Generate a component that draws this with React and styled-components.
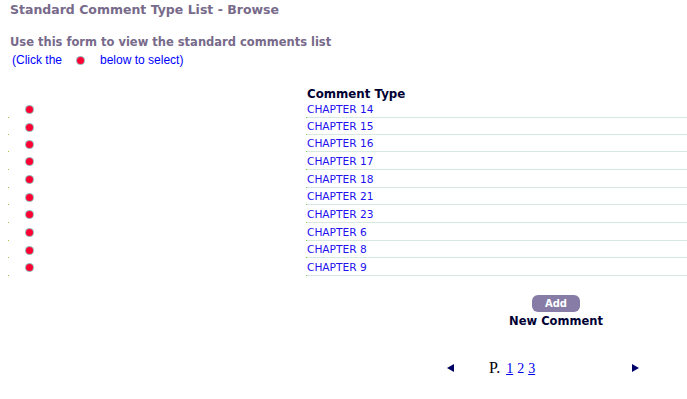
import React from "react";
import styled, { createGlobalStyle } from "styled-components";

const Global = createGlobalStyle`
  html, body { margin: 0; padding: 0; background: #ffffff; }
  body { font-family: "DejaVu Sans", Verdana, sans-serif; overflow: hidden; }
`;

const Page = styled.div`
  width: 687px;
  height: 399px;
  padding: 2px 0 0 10px;
  box-sizing: border-box;
`;

const Title = styled.h1`
  margin: 0;
  font-size: 12.5px;
  line-height: 16px;
  font-weight: bold;
  color: #776a8a;
`;

const Intro = styled.h2`
  margin: 17px 0 0;
  font-size: 11.5px;
  line-height: 15px;
  font-weight: bold;
  color: #776a8a;
`;

const Hint = styled.div`
  margin: 3px 0 0 2px;
  font-family: "Liberation Sans", Arial, sans-serif;
  font-size: 12px;
  line-height: 14px;
  color: #0000ff;
  display: flex;
  align-items: center;
`;

const Dot = styled.span`
  display: inline-block;
  width: 7px;
  height: 7px;
  border-radius: 50%;
  background: #ff0033;
  box-shadow: 0 0 0 1px rgba(70, 120, 130, 0.55);
  margin: ${(p) => p.$m || "0"};
  flex: none;
`;

const Table = styled.div`
  margin: 21px 0 0 -2px;
  display: grid;
  grid-template-columns: 298px 1fr;
`;

const HeaderCell = styled.div`
  font-size: 11.8px;
  line-height: 12px;
  font-weight: bold;
  color: #000033;
  padding-left: 1px;
`;

const BulletCell = styled.div`
  position: relative;
  height: ${(p) => p.$h}px;
  display: flex;
  align-items: center;
  padding-left: 18px;
  &::after {
    content: "";
    position: absolute;
    left: 0;
    bottom: 0;
    width: 1px;
    height: 1px;
    background: #99cc44;
  }
`;

const NameCell = styled.div`
  position: relative;
  height: ${(p) => p.$h}px;
  box-sizing: border-box;
  border-bottom: 1px solid #d6e8e2;
  display: flex;
  align-items: center;
  padding-left: 1px;
  font-size: 10.6px;
  color: #2211ee;
  &::after {
    content: "";
    position: absolute;
    left: 0;
    bottom: -1px;
    width: 1px;
    height: 1px;
    background: #88cc44;
  }
`;

const Actions = styled.div`
  margin: 19px 0 0 486px;
  width: 120px;
  display: flex;
  flex-direction: column;
  align-items: center;
`;

const AddButton = styled.button`
  width: 48px;
  height: 17px;
  border: none;
  border-radius: 6px;
  background: #877ca6;
  color: #ffffff;
  font-family: "DejaVu Sans", Verdana, sans-serif;
  font-size: 10px;
  font-weight: bold;
  padding: 0;
  line-height: 17px;
`;

const NewLabel = styled.div`
  margin-top: 2px;
  font-size: 11.5px;
  font-weight: bold;
  color: #000033;
  line-height: 14px;
`;

const Pager = styled.div`
  margin: 31px 0 0 437px;
  display: flex;
  align-items: center;
  height: 18px;
`;

const Arrow = styled.span`
  width: 0;
  height: 0;
  border-top: 4px solid transparent;
  border-bottom: 4px solid transparent;
  ${(p) =>
    p.$dir === "left"
      ? "border-right: 7px solid #000066;"
      : "border-left: 7px solid #000066;"}
  margin: ${(p) => p.$m || "0"};
`;

const Pages = styled.div`
  font-family: "Liberation Serif", "Times New Roman", serif;
  font-size: 16px;
  color: #000000;
  display: flex;
  gap: 4px;
  align-items: baseline;
  width: 143px;
`;

const PageLink = styled.a`
  color: #0000ee;
  text-decoration: ${(p) => (p.$current ? "none" : "underline")};
  font-size: 14px;
  margin-left: ${(p) => p.$ml || 0}px;
`;

const rows = [
  ["CHAPTER 14", 18],
  ["CHAPTER 15", 17],
  ["CHAPTER 16", 17],
  ["CHAPTER 17", 18],
  ["CHAPTER 18", 18],
  ["CHAPTER 21", 17],
  ["CHAPTER 23", 18],
  ["CHAPTER 6", 18],
  ["CHAPTER 8", 17],
  ["CHAPTER 9", 18],
];

export default function App() {
  return (
    <Page>
      <Global />
      <Title>Standard Comment Type List - Browse</Title>
      <Intro>Use this form to view the standard comments list</Intro>
      <Hint>
        (Click the <Dot $m="0 16px 0 15px" /> below to select)
      </Hint>
      <Table>
        <div />
        <HeaderCell>Comment Type</HeaderCell>
        {rows.map(([name, h]) => (
          <React.Fragment key={name}>
            <BulletCell $h={h}>
              <Dot $m="1px 0 0 0" />
            </BulletCell>
            <NameCell $h={h}>{name}</NameCell>
          </React.Fragment>
        ))}
      </Table>
      <Actions>
        <AddButton>Add</AddButton>
        <NewLabel>New Comment</NewLabel>
      </Actions>
      <Pager>
        <Arrow $dir="left" $m="0 35px 0 0" />
        <Pages>
          <span>P.</span>
          <PageLink href="#" $ml={2} onClick={(e) => e.preventDefault()}>1</PageLink>
          <PageLink $current>2</PageLink>
          <PageLink href="#" onClick={(e) => e.preventDefault()}>3</PageLink>
        </Pages>
        <Arrow $dir="right" />
      </Pager>
    </Page>
  );
}
